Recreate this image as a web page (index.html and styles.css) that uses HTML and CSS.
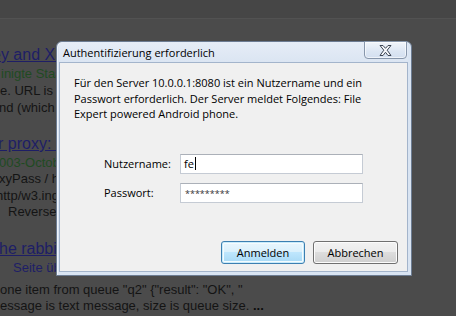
FILE: index.html
```html
<!DOCTYPE html>
<html lang="de">
  <head>
    <meta charset="UTF-8" />
    <meta name="viewport" content="width=device-width, initial-scale=1.0" />
    <title>Authentifizierung erforderlich</title>
    <link rel="stylesheet" href="styles.css">
  </head>
  <body>
    <div class="page">
      <div class="topbar"></div>
      <div class="results">
        <div class="result first">
          <a class="title cut-8" href="#">ey and XML</a>
          <div class="url cut-0">inigte Staaten</div>
          <div class="snip">e. URL is <b>http://localhost</b></div>
          <div class="snip cut-1">nd (which</div>
        </div>
        <div class="result">
          <a class="title cut-2" href="#">r proxy: HTTP</a>
          <div class="url cut-1">003-October</div>
          <div class="snip cut-1">xyPass / http</div>
          <div class="snip cut-3">http/w3.ingate</div>
          <div class="snip indent">Reverse ...</div>
        </div>
        <div class="result last">
          <a class="title cut-1" href="#">he rabbit</a>
          <div class="translate">Seite übersetzen</div>
          <div class="snip first-snip">one item from queue "q2" {"result": "OK", "</div>
          <div class="snip">essage is text message, size is queue size. <b>...</b></div>
        </div>
      </div>
    </div>

    <div class="dialog">
      <div class="titlebar">
        <span class="caption">Authentifizierung erforderlich</span>
        <button class="close" type="button" aria-label="Schließen">
          <svg width="13" height="11" viewBox="0 0 13 11">
            <polygon points="1,0.5 4,0.5 6.5,3.3 9,0.5 12,0.5 8.2,5.2 12,10.5 9,10.5 6.5,7.3 4,10.5 1,10.5 4.8,5.2" fill="#f7f9fc" stroke="#3e4654" stroke-width="1" stroke-linejoin="round" />
          </svg>
        </button>
      </div>
      <div class="client">
        <p class="message">Für den Server 10.0.0.1:8080 ist ein Nutzername und ein<br>Passwort erforderlich. Der Server meldet Folgendes: File<br>Expert powered Android phone.</p>
        <div class="fields">
          <label class="row">
            <span class="label">Nutzername:</span>
            <span class="input">fe<span class="caret"></span></span>
          </label>
          <label class="row">
            <span class="label">Passwort:</span>
            <span class="input secret">*********</span>
          </label>
        </div>
        <div class="buttons">
          <button class="btn default" type="button">Anmelden</button>
          <button class="btn" type="button">Abbrechen</button>
        </div>
      </div>
    </div>
  </body>
</html>
```

FILE: styles.css
```css
body {
  margin: 0;
  background: #4b4b4b;
  font-family: "Liberation Sans", Arial, sans-serif;
  overflow: hidden;
}
.page {
  height: 316px;
}
.topbar {
  height: 18px;
  background: #464646;
  border-bottom: 1px solid #525252;
}
.results {
  padding-top: 26px;
  white-space: nowrap;
}
.result {
  margin-bottom: 18px;
}
.result.last {
  margin-top: 1px;
}
.title {
  display: block;
  font-size: 16px;
  line-height: 20px;
  color: #1e1e66;
  text-decoration: underline;
}
.url {
  font-size: 13px;
  line-height: 17px;
  color: #1f4a22;
}
.snip {
  font-size: 13px;
  line-height: 16.5px;
  color: #141414;
}
.first .snip {
  line-height: 17px;
}
.snip b {
  color: #0c0c0c;
}
.translate {
  font-size: 13px;
  line-height: 17px;
  color: #1e1e66;
  padding-left: 13px;
}
.first-snip {
  margin-top: 6px;
}
.indent {
  padding-left: 8px;
}
.cut-0 { margin-left: 1px; }
.cut-1 { margin-left: -1px; }
.cut-2 { margin-left: -2px; }
.cut-3 { margin-left: -4px; }
.cut-8 { margin-left: -8px; }

/* dialog */
.dialog {
  position: absolute;
  left: 56px;
  top: 41px;
  width: 356px;
  height: 235px;
  box-sizing: border-box;
  display: flex;
  flex-direction: column;
  border: 1px solid #6c7c92;
  border-radius: 6px 6px 0 0;
  background: #d9e4f2;
  padding: 0 3px 3px 2px;
  font-family: "Open Sans", "Noto Sans", sans-serif;
  font-size: 11px;
  color: #000;
  box-shadow: inset 1px 1px 0 #eef3fa;
}
.titlebar {
  height: 20px;
  display: flex;
  align-items: center;
  padding-left: 4px;
  background: linear-gradient(#e6edf7, #dbe5f2);
  border-radius: 5px 5px 0 0;
}
.caption {
  font-size: 11px;
  color: #000;
}
.close {
  position: absolute;
  top: -1px;
  right: 4px;
  width: 43px;
  height: 18px;
  padding: 0;
  border: 1px solid #8796ab;
  border-radius: 0 0 4px 4px;
  background: linear-gradient(#f1f5fb, #dce6f3 60%, #d3dff0);
  box-shadow: inset 0 0 0 1px rgba(255, 255, 255, 0.6);
  display: flex;
  align-items: center;
  justify-content: center;
}
.close svg {
  display: block;
  margin-top: 1px;
}
.client {
  flex: 1;
  display: flex;
  flex-direction: column;
  background: #f0f0f0;
  border: 1px solid #a3b4cb;
  padding: 12px 9px 7px 14px;
}
.message {
  margin: 0;
  line-height: 15.5px;
}
.fields {
  margin-top: 32px;
  padding-left: 30px;
  display: flex;
  flex-direction: column;
  gap: 9px;
}
.row {
  display: flex;
  align-items: center;
}
.label {
  width: 76px;
}
.input {
  width: 183px;
  height: 20px;
  box-sizing: border-box;
  display: flex;
  align-items: center;
  padding-left: 3px;
  background: #fff;
  border: 1px solid #c5cbd4;
  border-top-color: #abb0b8;
  font-size: 11px;
}
.caret {
  display: inline-block;
  width: 1px;
  height: 13px;
  margin-left: 1px;
  background: #000;
}
.secret {
  font-size: 9px;
  padding-top: 1px;
  padding-left: 4px;
  color: #333;
}
.buttons {
  margin-top: auto;
  display: flex;
  justify-content: flex-end;
  gap: 8px;
}
.btn {
  width: 85px;
  height: 23px;
  padding: 0;
  font-family: inherit;
  font-size: 11px;
  color: #000;
  border: 1px solid #707070;
  border-radius: 3px;
  background: linear-gradient(#f2f2f2 0%, #ebebeb 49%, #dddddd 50%, #cfcfcf 100%);
  box-shadow: inset 0 0 0 1px #fcfcfc;
}
.btn.default {
  width: 84px;
  border-color: #3c7fb1;
  background: linear-gradient(#eaf6fd 0%, #d9f0fc 49%, #bee6fd 50%, #a7d9f5 100%);
  box-shadow: inset 0 0 0 1px #c8ebfb, inset 0 0 0 2px #f4fbfe;
}
```
